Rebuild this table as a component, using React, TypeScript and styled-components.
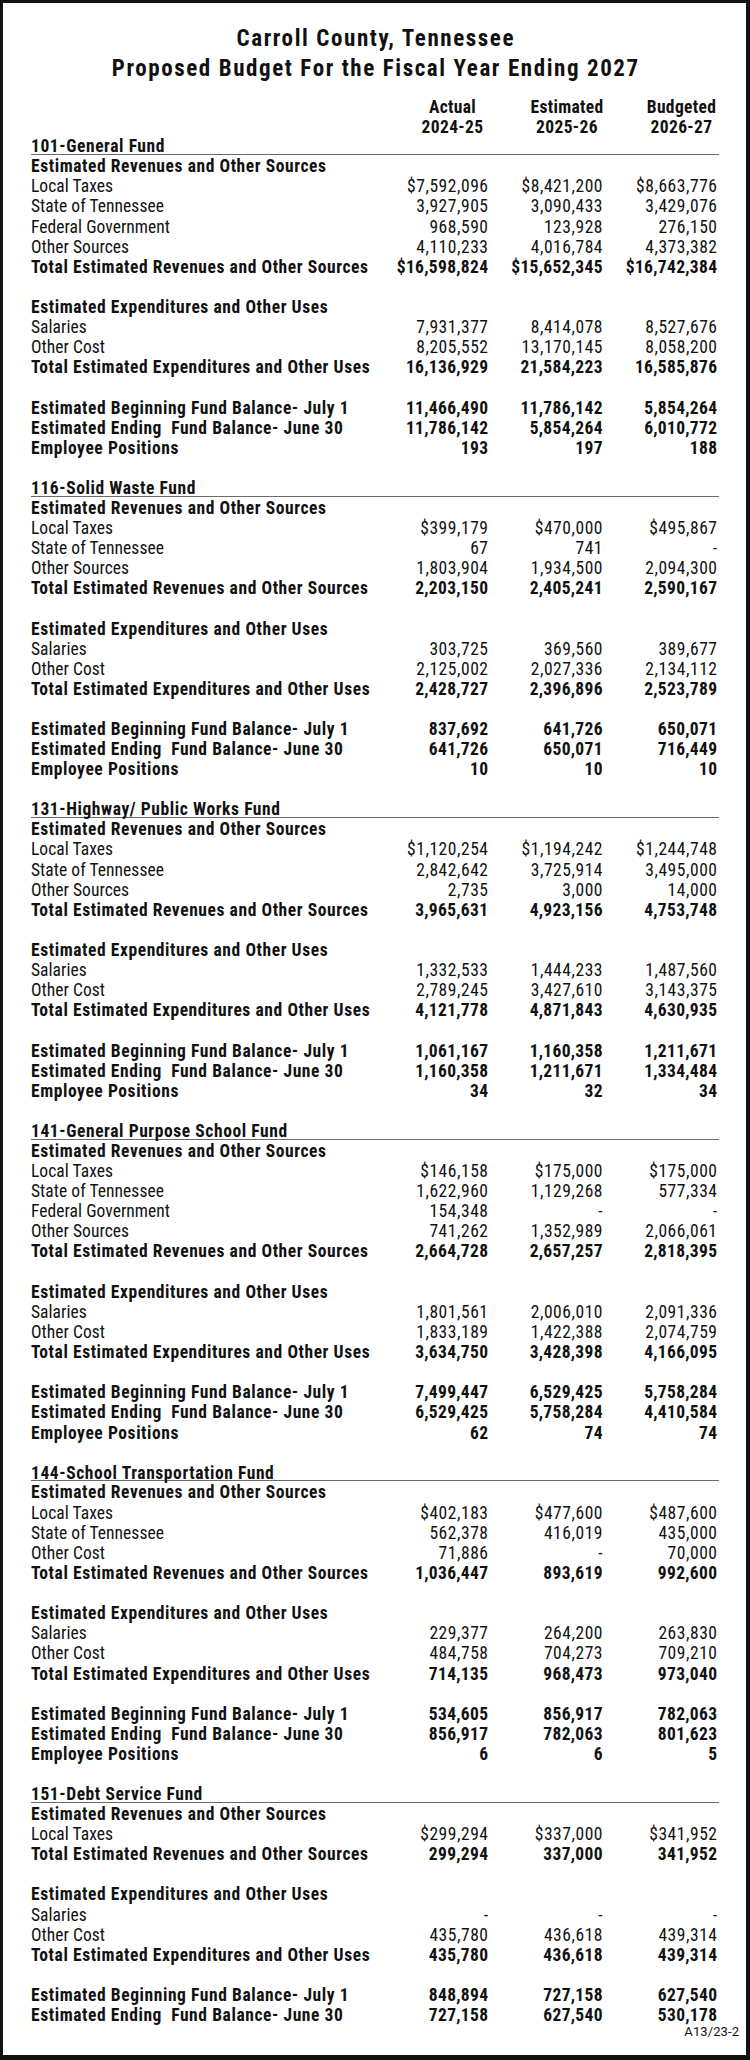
import React from 'react';
import styled, { createGlobalStyle } from 'styled-components';

const GlobalStyle = createGlobalStyle`
  html, body { margin: 0; padding: 0; background: #ffffff; }
  body {
    font-family: "Roboto Condensed", "DejaVu Sans Condensed", "Liberation Sans", sans-serif;
    color: #111111;
  }
`;

const PITCH = '20.14px';

const Frame = styled.div`
  box-sizing: border-box;
  width: 750px;
  height: 2060px;
  border-style: solid;
  border-color: #121212;
  border-width: 3px 4px 5px 3px;
  padding: 20.54px 27px 0 28px;
  display: flex;
  flex-direction: column;
  background: #fff;
`;

const Title = styled.h1`
  margin: 0;
  padding-left: 1.58px;
  font-size: 23px;
  line-height: 30.6px;
  font-weight: 700;
  letter-spacing: 1.58px;
  text-align: center;
`;

const Grid = styled.div`
  display: grid;
  grid-template-columns: minmax(0, 1fr) 100px 100px 100px;
  column-gap: 14.5px;
  padding-right: 2px;
`;

const ColumnHeader = styled(Grid)`
  margin-top: 12.56px;
  margin-bottom: -0.68px;
  font-size: 17.5px;
  line-height: 20px;
  font-weight: 700;
  letter-spacing: 0.35px;
`;

const HeadCell = styled.div<{ $col: number }>`
  grid-column: ${(p) => p.$col};
  justify-self: end;
  width: 71px;
  white-space: nowrap;
  display: flex;
  flex-direction: column;
  align-items: center;
`;

const FundHeading = styled.div`
  margin: 2.81px 0 1.26px;
  height: 14.57px;
  line-height: 14.57px;
  font-size: 17.5px;
  font-weight: 700;
  letter-spacing: 0.58px;
  border-bottom: 1.5px solid #6a6a6a;
  white-space: nowrap;
`;

const Row = styled(Grid)<{ $bold?: boolean }>`
  height: ${PITCH};
  line-height: ${PITCH};
  font-size: 17.5px;
  font-weight: ${(p) => (p.$bold ? 700 : 400)};
`;

const Label = styled.div<{ $bold?: boolean }>`
  white-space: pre;
  letter-spacing: ${(p) => (p.$bold ? '0.58px' : '0.05px')};
`;

const Num = styled.div<{ $bold?: boolean }>`
  display: flex;
  justify-content: flex-end;
  white-space: nowrap;
  letter-spacing: ${(p) => (p.$bold ? '0.3px' : '0.55px')};
  margin-right: ${(p) => (p.$bold ? '-0.3px' : '-0.55px')};
`;

const Spacer = styled.div`
  height: ${PITCH};
`;

const Footer = styled.div`
  margin-top: -0.8px;
  margin-right: -20.1px;
  text-align: right;
  font-family: Roboto, "Liberation Sans", sans-serif;
  font-size: 13px;
  line-height: 16px;
  letter-spacing: 0.1px;
`;

type Line =
  | { kind: 'group'; label: string }
  | { kind: 'item'; label: string; v: [string, string, string] }
  | { kind: 'total'; label: string; v: [string, string, string] }
  | { kind: 'blank' };

type Fund = { title: string; lines: Line[] };

const REV = 'Estimated Revenues and Other Sources';
const EXP = 'Estimated Expenditures and Other Uses';
const TREV = 'Total Estimated Revenues and Other Sources';
const TEXP = 'Total Estimated Expenditures and Other Uses';
const BEG = 'Estimated Beginning Fund Balance- July 1';
const END = 'Estimated Ending  Fund Balance- June 30';
const EMP = 'Employee Positions';

const g = (label: string): Line => ({ kind: 'group', label });
const i = (label: string, a: string, b: string, c: string): Line => ({ kind: 'item', label, v: [a, b, c] });
const t = (label: string, a: string, b: string, c: string): Line => ({ kind: 'total', label, v: [a, b, c] });
const blank: Line = { kind: 'blank' };

const funds: Fund[] = [
  {
    title: '101-General Fund',
    lines: [
      g(REV),
      i('Local Taxes', '$7,592,096', '$8,421,200', '$8,663,776'),
      i('State of Tennessee', '3,927,905', '3,090,433', '3,429,076'),
      i('Federal Government', '968,590', '123,928', '276,150'),
      i('Other Sources', '4,110,233', '4,016,784', '4,373,382'),
      t(TREV, '$16,598,824', '$15,652,345', '$16,742,384'),
      blank,
      g(EXP),
      i('Salaries', '7,931,377', '8,414,078', '8,527,676'),
      i('Other Cost', '8,205,552', '13,170,145', '8,058,200'),
      t(TEXP, '16,136,929', '21,584,223', '16,585,876'),
      blank,
      t(BEG, '11,466,490', '11,786,142', '5,854,264'),
      t(END, '11,786,142', '5,854,264', '6,010,772'),
      t(EMP, '193', '197', '188'),
      blank,
    ],
  },
  {
    title: '116-Solid Waste Fund',
    lines: [
      g(REV),
      i('Local Taxes', '$399,179', '$470,000', '$495,867'),
      i('State of Tennessee', '67', '741', '-'),
      i('Other Sources', '1,803,904', '1,934,500', '2,094,300'),
      t(TREV, '2,203,150', '2,405,241', '2,590,167'),
      blank,
      g(EXP),
      i('Salaries', '303,725', '369,560', '389,677'),
      i('Other Cost', '2,125,002', '2,027,336', '2,134,112'),
      t(TEXP, '2,428,727', '2,396,896', '2,523,789'),
      blank,
      t(BEG, '837,692', '641,726', '650,071'),
      t(END, '641,726', '650,071', '716,449'),
      t(EMP, '10', '10', '10'),
      blank,
    ],
  },
  {
    title: '131-Highway/ Public Works Fund',
    lines: [
      g(REV),
      i('Local Taxes', '$1,120,254', '$1,194,242', '$1,244,748'),
      i('State of Tennessee', '2,842,642', '3,725,914', '3,495,000'),
      i('Other Sources', '2,735', '3,000', '14,000'),
      t(TREV, '3,965,631', '4,923,156', '4,753,748'),
      blank,
      g(EXP),
      i('Salaries', '1,332,533', '1,444,233', '1,487,560'),
      i('Other Cost', '2,789,245', '3,427,610', '3,143,375'),
      t(TEXP, '4,121,778', '4,871,843', '4,630,935'),
      blank,
      t(BEG, '1,061,167', '1,160,358', '1,211,671'),
      t(END, '1,160,358', '1,211,671', '1,334,484'),
      t(EMP, '34', '32', '34'),
      blank,
    ],
  },
  {
    title: '141-General Purpose School Fund',
    lines: [
      g(REV),
      i('Local Taxes', '$146,158', '$175,000', '$175,000'),
      i('State of Tennessee', '1,622,960', '1,129,268', '577,334'),
      i('Federal Government', '154,348', '-', '-'),
      i('Other Sources', '741,262', '1,352,989', '2,066,061'),
      t(TREV, '2,664,728', '2,657,257', '2,818,395'),
      blank,
      g(EXP),
      i('Salaries', '1,801,561', '2,006,010', '2,091,336'),
      i('Other Cost', '1,833,189', '1,422,388', '2,074,759'),
      t(TEXP, '3,634,750', '3,428,398', '4,166,095'),
      blank,
      t(BEG, '7,499,447', '6,529,425', '5,758,284'),
      t(END, '6,529,425', '5,758,284', '4,410,584'),
      t(EMP, '62', '74', '74'),
      blank,
    ],
  },
  {
    title: '144-School Transportation Fund',
    lines: [
      g(REV),
      i('Local Taxes', '$402,183', '$477,600', '$487,600'),
      i('State of Tennessee', '562,378', '416,019', '435,000'),
      i('Other Cost', '71,886', '-', '70,000'),
      t(TREV, '1,036,447', '893,619', '992,600'),
      blank,
      g(EXP),
      i('Salaries', '229,377', '264,200', '263,830'),
      i('Other Cost', '484,758', '704,273', '709,210'),
      t(TEXP, '714,135', '968,473', '973,040'),
      blank,
      t(BEG, '534,605', '856,917', '782,063'),
      t(END, '856,917', '782,063', '801,623'),
      t(EMP, '6', '6', '5'),
      blank,
    ],
  },
  {
    title: '151-Debt Service Fund',
    lines: [
      g(REV),
      i('Local Taxes', '$299,294', '$337,000', '$341,952'),
      t(TREV, '299,294', '337,000', '341,952'),
      blank,
      g(EXP),
      i('Salaries', '-', '-', '-'),
      i('Other Cost', '435,780', '436,618', '439,314'),
      t(TEXP, '435,780', '436,618', '439,314'),
      blank,
      t(BEG, '848,894', '727,158', '627,540'),
      t(END, '727,158', '627,540', '530,178'),
    ],
  },
];

function renderLine(line: Line, key: number) {
  if (line.kind === 'blank') return <Spacer key={key} />;
  if (line.kind === 'group')
    return (
      <Row key={key} $bold>
        <Label $bold>{line.label}</Label>
      </Row>
    );
  const bold = line.kind === 'total';
  return (
    <Row key={key} $bold={bold}>
      <Label $bold={bold}>{line.label}</Label>
      {line.v.map((v, k) => (
        <Num key={k} $bold={bold}>
          {v}
        </Num>
      ))}
    </Row>
  );
}

export default function App() {
  return (
    <>
      <GlobalStyle />
      <Frame>
        <Title>
          Carroll County, Tennessee
          <br />
          Proposed Budget For the Fiscal Year Ending 2027
        </Title>
        <ColumnHeader>
          <HeadCell $col={2}>
            <span>Actual</span>
            <span>2024-25</span>
          </HeadCell>
          <HeadCell $col={3}>
            <span>Estimated</span>
            <span>2025-26</span>
          </HeadCell>
          <HeadCell $col={4}>
            <span>Budgeted</span>
            <span>2026-27</span>
          </HeadCell>
        </ColumnHeader>
        {funds.map((f) => (
          <section key={f.title}>
            <FundHeading>{f.title}</FundHeading>
            {f.lines.map(renderLine)}
          </section>
        ))}
        <Footer>A13/23-2</Footer>
      </Frame>
    </>
  );
}
